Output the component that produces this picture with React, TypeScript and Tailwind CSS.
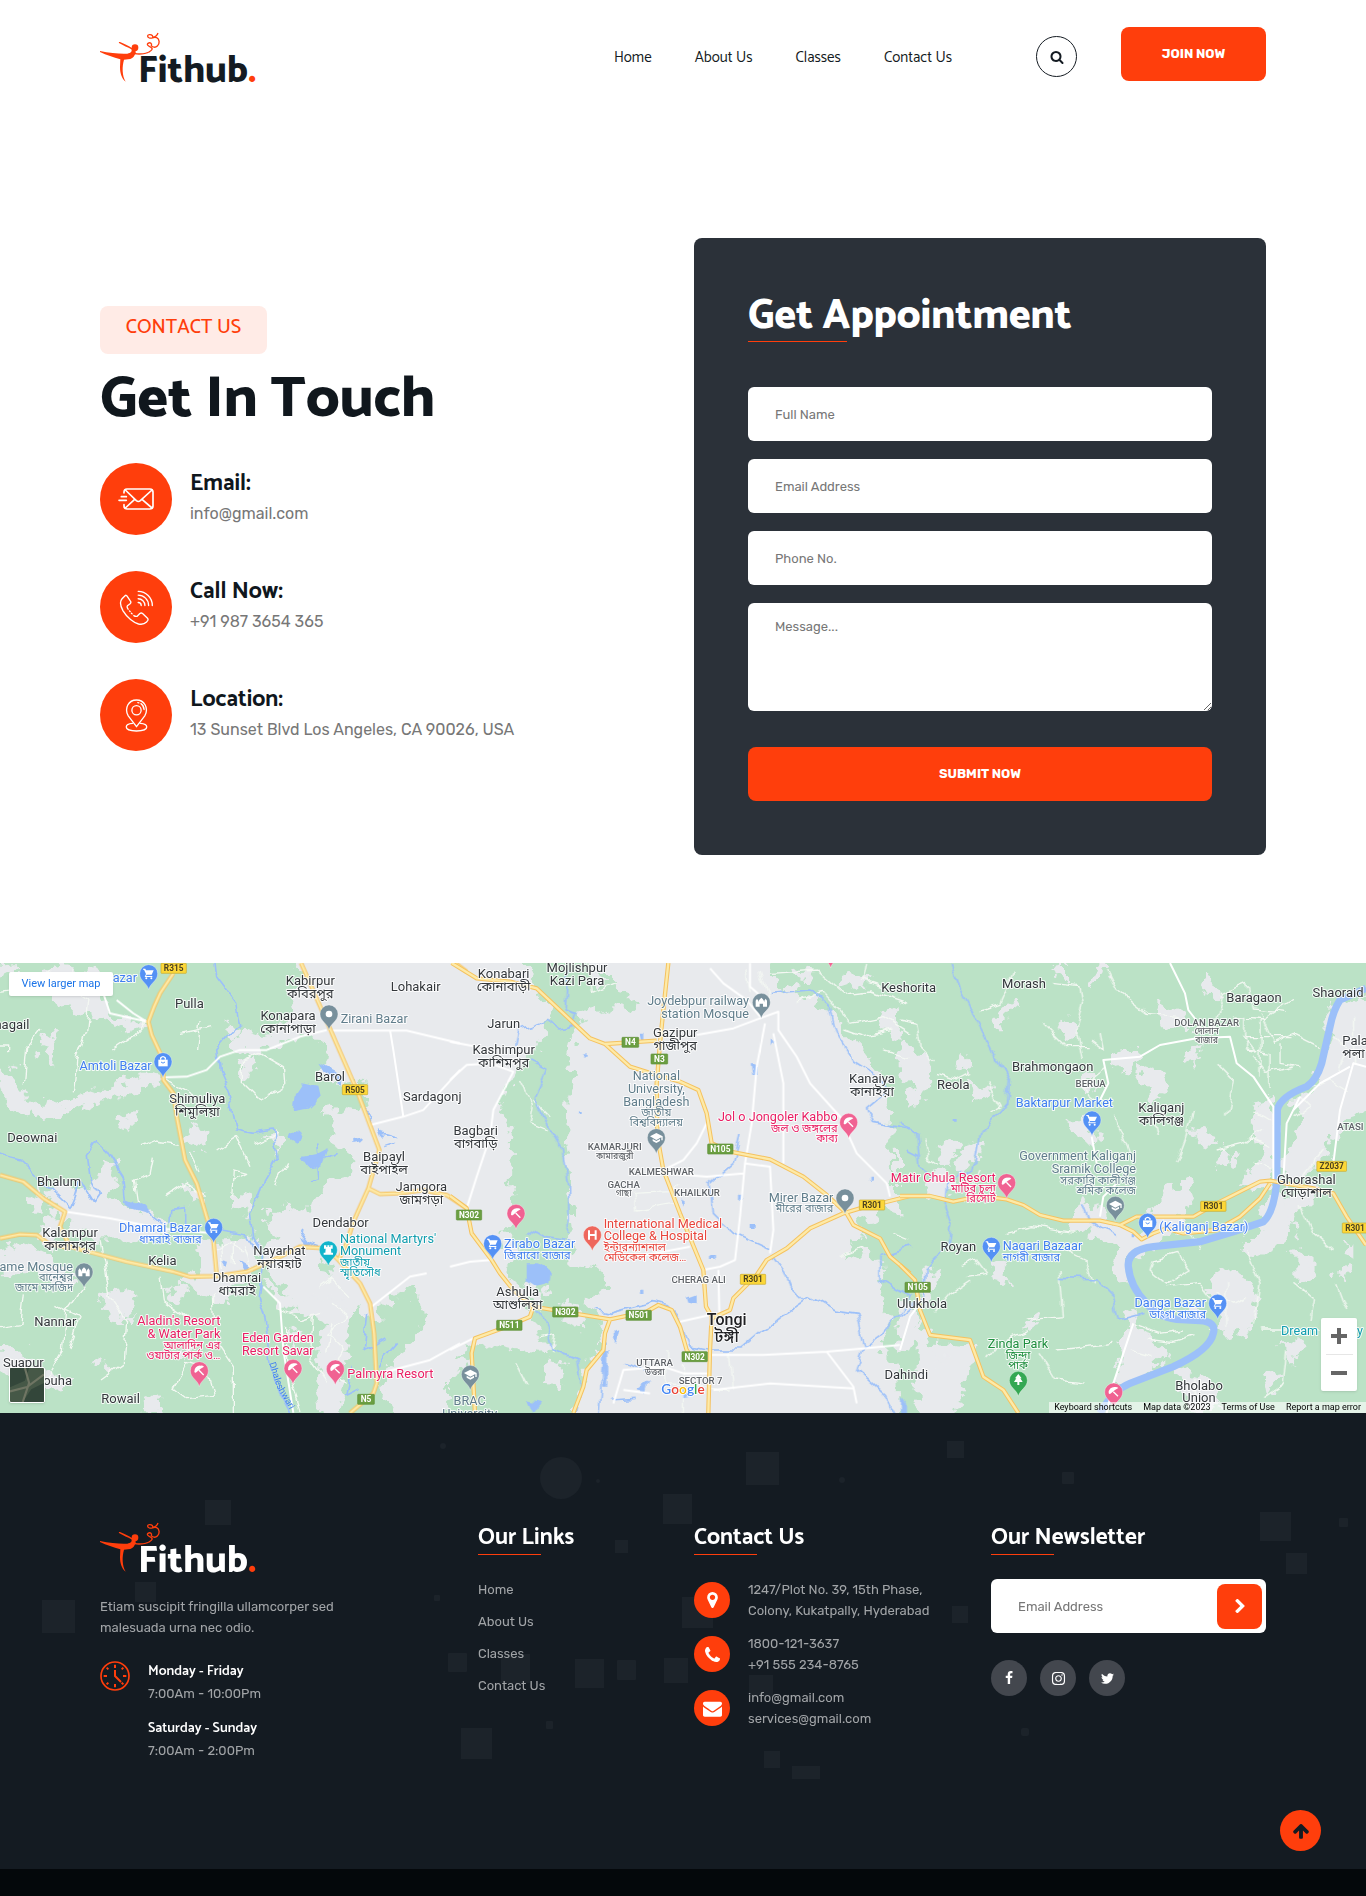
import React from "react";
import { FaInstagram, FaTwitter } from "react-icons/fa";

const HEAD = "font-['Catamaran','Open_Sans','Noto_Sans_Bengali',sans-serif]";
const BODY = "font-['Rubik','Inter',sans-serif]";

/* ---------- Logo ---------- */

function Logo({ light = false }: { light?: boolean }) {
  return (
    <svg viewBox="0 0 480 156" className="h-[52px] w-40 overflow-visible" role="img" aria-label="Fithub.">
      <g fill="#ff3e0c">
        <path d="M0 57C30 64 62 66 82 65C93 63 97 58 94 52C84 46 70 41 57 33C56 30 57 29 60 30C74 36 86 41 97 49C108 54 110 62 104 69C101 77 94 81 84 82L72 83C66 104 66 130 77 149C66 142 60 124 60 106L61 82C40 76 20 69 0 60Z" />
        <circle cx="105" cy="47" r="10" />
        <path d="M102 62C120 66 138 64 149 58L150 60C138 68 118 70 103 67Z" />
      </g>
      <path
        d="M147 60C156 55 160 50 153 46C145 42 139 38 144 34C150 30 157 34 154 41C158 46 166 48 172 42C180 34 179 22 170 17C160 13 156 21 148 18C141 15 141 9 148 8C156 7 160 13 158 17C166 15 172 9 174 3"
        fill="none"
        stroke="#ff3e0c"
        strokeWidth="4"
      />
      <text
        x="114"
        y="150"
        fontFamily="Catamaran, 'Open Sans', sans-serif"
        fontWeight="800"
        fontSize="111"
        fill={light ? "#ffffff" : "#141b22"}
      >
        Fithub<tspan fill="#ff3e0c">.</tspan>
      </text>
    </svg>
  );
}

/* ---------- Line icons ---------- */

function MailFast() {
  return (
    <svg viewBox="0 0 108 66" className="h-[22px] w-9" fill="none" stroke="#fff" strokeWidth="5" strokeLinecap="round" strokeLinejoin="round">
      <path d="M18 15V12Q18 3 27 3H96Q105 3 105 12V54Q105 63 96 63H27Q18 63 18 54V50" />
      <path d="M22 6L55 38Q61 43 67 38L102 6M102 60L72 34M22 60L50 34" />
      <path d="M10 26H25M3 37H25" />
    </svg>
  );
}

function PhoneWaves() {
  return (
    <svg viewBox="0 0 104 104" className="h-[35px] w-[35px]" fill="none" stroke="#fff" strokeWidth="4" strokeLinecap="round" strokeLinejoin="round">
      <path d="M18 17L9 26C2 34 3 46 12 62C24 82 44 97 58 101C68 103 76 101 81 96L85 91Q88 87 84 83L70 70Q66 67 62 70L54 78C50 79 47 78 44 76M27 57C24 53 23 50 25 47L33 41Q37 37 34 33L24 18Q21 14 18 17M31 62L33 64M37 69L39 71" />
      <path d="M57 4C80 4 99 23 99 46M57 15C74 15 88 29 88 46M57 26C68 26 77 35 77 46M57 37C62 37 66 41 66 46" />
    </svg>
  );
}

function PinOutline() {
  return (
    <svg viewBox="0 0 68 100" className="h-[33px] w-[23px]" fill="none" stroke="#fff" strokeWidth="4" strokeLinecap="round" strokeLinejoin="round">
      <path d="M34 84L9 51C-4 28 10 3 34 3S72 28 59 51Z" />
      <circle cx="34" cy="34" r="14" />
      <path d="M38 11C49 12 56 20 57 32" strokeDasharray="3 7 40" />
      <path d="M22 74C9 75 3 80 3 85C3 92 16 97 34 97S65 92 65 85C65 80 58 75 46 74" />
    </svg>
  );
}

function ClockOutline() {
  return (
    <svg viewBox="0 0 90 90" className="h-[30px] w-[30px] shrink-0" fill="none" stroke="#ff3e0c" strokeWidth="6">
      <circle cx="45" cy="45" r="42" strokeWidth="5" />
      <path d="M45 27V45L63 63" />
      <path d="M45 11V21M45 69V79M11 45H21M69 45H79" />
      <path d="M20 20L25 25M65 65L70 70M70 20L65 25M25 65L20 70" />
    </svg>
  );
}

/* ---------- Solid icons ---------- */

function Solid({ box, d, className }: { box: string; d: string; className: string }) {
  return (
    <svg viewBox={box} className={className} fill="currentColor" aria-hidden="true">
      <path d={d} />
    </svg>
  );
}

const SQUARE = "0 0 1792 1792";

const SearchIcon = () => (
  <Solid
    box={SQUARE}
    className="h-[14px] w-[14px]"
    d="M1216 832q0-185-131.5-316.5t-316.5-131.5-316.5 131.5-131.5 316.5 131.5 316.5 316.5 131.5 316.5-131.5 131.5-316.5zm512 832q0 52-38 90t-90 38q-54 0-90-38l-343-342q-179 124-399 124-143 0-273.5-55.5t-225-150-150-225-55.5-273.5 55.5-273.5 150-225 225-150 273.5-55.5 273.5 55.5 225 150 150 225 55.5 273.5q0 220-124 399l343 343q37 37 37 90z"
  />
);

const MarkerIcon = () => (
  <Solid
    box="0 0 1024 1536"
    className="h-4 w-[11px]"
    d="M768 512q0-106-75-181t-181-75-181 75-75 181 75 181 181 75 181-75 75-181zm256 0q0 109-33 179l-364 774q-16 33-47.5 52t-67.5 19-67.5-19-46.5-52l-365-774q-33-70-33-179 0-212 150-362t362-150 362 150 150 362z"
  />
);

const PhoneIcon = () => (
  <Solid
    box="0 0 1408 1408"
    className="h-[15px] w-[15px]"
    d="M1408 1112q0 27-10 70.5t-21 68.5q-21 50-122 106-94 51-186 51-27 0-53-3.5t-57.5-12.5-47-14.5-55.5-20.5-49-18q-98-35-175-83-127-79-264-216t-216-264q-48-77-83-175-3-9-18-49t-20.5-55.5-14.5-47-12.5-57.5-3.5-53q0-92 51-186 56-101 106-122 25-11 68.5-21t70.5-10q14 0 21 3 18 6 53 76 11 19 30 54t35 63.5 31 53.5q3 4 17.5 25t21.5 35.5 7 28.5q0 20-28.5 50t-62 55-62 53-28.5 46q0 9 5 22.5t8.5 20.5 14 24 11.5 19q76 137 174 235t235 174q2 1 19 11.5t24 14 20.5 8.5 22.5 5q18 0 46-28.5t53-62 55-62 50-28.5q14 0 28.5 7t35.5 21.5 25 17.5q25 15 53.5 31t63.5 35 54 30q70 35 76 53 3 7 3 21z"
  />
);

const EnvelopeIcon = () => (
  <Solid
    box={SQUARE}
    className="h-[19px] w-[19px]"
    d="M1792 710v794q0 66-47 113t-113 47h-1472q-66 0-113-47t-47-113v-794q44 49 101 87 362 246 497 345 57 42 92.5 65.5t94.5 48 110 24.5h2q51 0 110-24.5t94.5-48 92.5-65.5q170-123 498-345 57-39 100-87zm0-294q0 79-49 151t-122 123q-376 261-468 325-10 7-42.5 31t-54 38.5-52 32.5-57.5 27-50 9h-2q-23 0-50-9t-57.5-27-52-32.5-54-38.5-42.5-31q-91-64-262-182.5t-205-142.5q-62-42-117-115.5t-55-136.5q0-78 41.5-130t118.5-52h1472q65 0 112.5 47t47.5 113z"
  />
);

const ChevronIcon = () => (
  <Solid
    box="70 -160 1080 1548"
    className="h-[14px] w-[10px]"
    d="M1107 659l-742 742q-19 19-45 19t-45-19l-166-166q-19-19-19-45t19-45l531-531-531-531q-19-19-19-45t19-45l166-166q19-19 45-19t45 19l742 742q19 19 19 45t-19 45z"
  />
);

const ArrowUpIcon = () => (
  <Solid
    box={SQUARE}
    className="h-[18px] w-[18px]"
    d="M1675 971q0 51-37 90l-75 75q-38 38-91 38-54 0-90-38l-294-293v704q0 52-37.5 84.5t-90.5 32.5h-128q-53 0-90.5-32.5t-37.5-84.5v-704l-294 293q-36 38-90 38t-90-38l-75-75q-38-38-38-90 0-53 38-91l651-651q35-37 90-37 54 0 91 37l651 651q37 39 37 91z"
  />
);

const FacebookIcon = () => (
  <Solid
    box={SQUARE}
    className="h-[14px] w-[14px]"
    d="M1343 12v264h-157q-86 0-116 36t-30 108v189h293l-39 296h-254v759h-306v-759h-255v-296h255v-218q0-186 104-288.5t277-102.5q147 0 228 12z"
  />
);

/* ---------- Map ---------- */

const GREEN = "#bbe2c6";
const LAND = "#e8eaed";
const WATER = "#9cc0f9";

type Tile = { x: number; green: string[]; gray: string[]; water: string[]; ponds: string[]; lanes: string[]; white: string[]; yellow: string[] };

const tiles: Tile[] = [
  {
    x: 0,
    green: [
      "M-60 0H880L905 80L870 130L880 170L830 230L700 260L690 300L760 310L830 285L880 265L960 270L985 310L950 370L990 400L1090 395L1100 480L1010 470L960 500L1000 520L995 570L1060 620L1055 680L980 700L945 760L900 790L860 760L800 790L820 860L780 900L830 1000L900 1080L990 1080L960 1180L940 1300L960 1430H-60Z",
      "M1060 1080L1140 1110L1145 1060L1250 1010L1275 1150L1170 1230L1150 1330L1210 1430H1060L1010 1330L1040 1220Z",
      "M960 930L1010 940L1000 965L960 960Z",
      "M1330 1340L1400 1290V1430H1320Z",
    ],
    gray: [
      "M190 50L290 65L310 130L330 190L360 215L440 215L390 240L320 210L220 185L160 140L140 70Z",
      "M0 50L60 45L40 70L0 90Z",
      "M120 260L170 250L160 290L145 340L120 300L130 285Z",
      "M0 360L40 370L70 440L150 470L330 410L460 370L500 385L450 410L340 440L240 470L100 500L40 490L0 400Z",
      "M360 500L410 490L390 550L350 540Z",
      "M570 520L610 550L600 590L560 570Z",
      "M720 340L760 320L750 380L730 390Z",
      "M310 630L350 640L330 720L380 780L450 790L500 830L420 880L300 800L240 790L180 830L150 890L120 860L170 790L150 720L200 700L260 720L300 690Z",
      "M230 720L300 790L380 820L370 860L300 870L220 830Z",
      "M600 880L720 870L760 850L770 930L720 1000L680 1050L600 1030L560 990L610 960Z",
      "M800 1000L860 1050L920 1060L990 1040L1060 1080L1040 1170L1000 1220L960 1180L980 1120L900 1080L830 1070Z",
      "M310 1040L360 1020L420 1050L370 1090L360 1130L330 1090Z",
      "M0 900L60 880L140 920L230 1000L160 1010L90 960L0 960Z",
      "M0 1180L50 1200L110 1250L200 1300L120 1310L30 1280L0 1240Z",
      "M380 1090L400 1100L390 1130ZM520 1210L570 1200L560 1230Z",
      "M800 560L840 560L830 600ZM700 730L760 740L740 790L700 770Z",
      "M560 720L600 730L580 760ZM280 1220L310 1240L290 1260Z",
      "M690 210L720 240L700 255L680 240ZM500 1020L550 1000L530 1050Z",
      "M110 720L150 740L120 790L90 760ZM440 1340L480 1350L470 1380H430ZM870 1130L900 1150L880 1190Z",
    ],
    water: [
      "M645 39L650 80L710 160L722 230L685 260L650 300L658 360L685 420L710 540L760 550L820 540L835 620L795 690L780 740L748 790L758 860L790 920L775 1040L795 1100L810 1240L830 1310L875 1389",
      "M0 615L60 630L120 690L210 775L225 740L240 690L280 755L298 730L270 680L262 620L290 575L320 600L370 680L380 760L450 790L490 820M510 820L512 775L560 770V830M640 840L740 855L770 900",
      "M1100 490L1120 500L1105 520M1060 575L1090 570M1140 545L1190 560M1150 590L1180 580M1010 610L960 640L910 625M950 580L960 680L930 690M900 840L930 880L960 890M1060 1250L1040 1330L1080 1310M1100 1090L1090 1200L1160 1160M1130 1250L1190 1180",
    ],
    ponds: [
      "M905 400L955 410L962 440L930 470L878 478L885 430Z",
      "M955 338L1030 375L1025 398L975 370Z",
      "M870 540L905 545L890 575L865 560Z",
      "M380 750L430 770L440 790L390 775Z",
      "M905 625L950 615L990 595L970 650L925 655Z",
      "M670 930L690 935L685 955ZM715 930L745 950L735 970ZM905 860L935 880L920 895Z",
      "M1060 570L1090 565L1085 580L1060 585ZM1130 540L1150 550L1140 565ZM1085 480H1100L1095 495Z",
    ],
    lanes: [
      "M0 130L80 120L150 60M220 50L210 110L270 150L260 240L230 330L220 430M120 240L80 290L70 400M0 285H20V310M440 215L400 260L340 300M500 390L580 440L600 480M590 300L600 210M540 250L640 230M300 870L330 1040L380 1110L370 1240L300 1290M420 590L470 570L530 580M460 620L450 670L400 690L410 760M700 690L740 670L700 660L695 740M620 740L560 700L500 740M250 1010L200 1080L190 1200L130 1300M520 1310L560 1240L620 1260L640 1330L560 1340Z",
      "M730 330L780 310L850 350L855 410L780 450L730 400ZM650 600L710 560L750 650M570 600L600 660M830 550L760 580M860 640L830 700M940 1100L930 1230L980 1300M830 1080L900 1110L960 1090M70 1030L60 1120L0 1130M160 1060L240 1100L210 1200M640 1030L645 1170L700 1250V1389M480 980L490 1050L560 1100M860 1130V1260L900 1380",
      "M650 900L690 880L730 900M660 880L670 960M700 870L700 940M730 880L750 960L690 1000M990 1060L1040 1100L980 1150L1030 1200L990 1280L1040 1300M1000 1110L980 1200M960 1020L1000 990L1050 1040",
    ],
    white: [
      "M980 240L900 260L800 300L720 300L660 320L620 360L560 380L490 382",
      "M985 242H1220L1380 280M1170 240L1180 300L1210 500L1110 525M1210 500L1270 480L1380 360",
      "M195 785L330 805L480 835L640 850",
      "M310 130L330 190L440 215M440 215L400 190L350 150",
      "M1020 930L1060 960M1115 1070L1230 980L1280 970M1140 1270L1290 1230L1380 1180",
      "M790 1010L840 1060L850 1200L880 1389",
    ],
    yellow: [
      "M520 70L480 130L462 170L445 215L455 255L490 330L490 390L520 430L530 500L555 630L590 700L640 870L650 975",
      "M903 39L985 225L1070 420L1138 600L1105 715L1060 815L1040 880L1015 930L1080 1000L1110 1060L1122 1150L1130 1300L1120 1330L1050 1389",
      "M1105 715L1140 732L1200 730L1270 720L1340 735L1400 775",
      "M0 675L70 695L130 745L195 785L180 830L210 890L380 935L520 965L570 980L650 978L740 965L830 925L900 890L980 895L1015 930",
      "M0 865L60 853L110 855L145 880L210 895",
      "M1365 39L1400 65",
    ],
  },
  {
    x: 1350,
    green: [
      "M205 0H400L410 60H470L520 130L570 160L560 190L480 170L400 190L370 250L355 340L372 380L350 440L345 560L355 700L365 830L360 940L450 960L475 1000L440 1030L400 1050L450 1100L460 1200L400 1260L370 1430H120L90 1300L30 1210L110 1180L200 1200L300 1210L250 1100L200 1010L170 960L200 900L160 850L200 790L185 700L190 560L150 480L170 410L190 370L230 330L260 290L290 230L310 170L270 130Z",
      "M950 0H1400V720H1315L1320 480L1290 370L1240 300L1180 240L1100 140L1000 110L960 70Z",
      "M1170 940L1190 880L1250 860L1230 820L1290 785L1400 800V1430H1350L1340 1250L1290 1200L1320 1100L1290 1010L1310 950L1250 900Z",
      "M0 1290L60 1250L110 1300V1430H0Z",
    ],
    gray: [
      "M330 1060L380 1070L390 1140L340 1100ZM1200 60L1260 80L1240 120L1180 100Z",
      "M1040 60L1080 80L1060 110ZM1300 180L1350 200L1340 260L1290 230Z",
      "M240 980L290 1030L270 1060L230 1040ZM1330 600L1380 620V690L1330 660Z",
      "M300 1230L350 1250L330 1320L280 1290ZM420 60L460 90L430 110Z",
    ],
    water: [
      "M355 60L345 180L380 190L370 230L330 240L290 205L250 230L210 240L200 285",
      "M240 335L290 360L255 440L290 520L340 600L355 700L358 850M230 860L260 840L290 860L360 870",
      "M250 1070L290 1120L310 1200L380 1230L390 1300L380 1389M440 1080L480 1090L610 1055L650 1065L690 1110L715 1190L770 1200L870 1200L940 1140L1020 1080L1080 1040L1150 1080L1220 1090L1245 1190L1220 1260L1300 1330L1330 1389M1245 1190L1300 1150L1360 1080L1380 1040L1290 990V920L1380 890",
      "M970 920L1000 960L1020 1010L1060 1050M960 130L1080 120L1140 170L1160 250L1210 330L1290 380L1310 420L1250 470L1270 520L1380 540M870 560L850 640L780 700L790 790L850 850L960 900",
      "M465 1180L450 1389M480 1350L560 1345M530 1240L600 1270",
    ],
    ponds: [
      "M230 940L260 940L300 965L295 1000L260 1010L230 990Z",
      "M565 245H580V265H570ZM905 340H920V375H910ZM965 265L975 275L965 290ZM690 745L705 755L695 770ZM905 825H920V840H905ZM780 915H795V930H780Z",
      "M460 1200H475V1310H462ZM490 1140L510 1150L495 1180ZM710 1040L740 1030V1060L715 1055ZM230 1350L270 1360L250 1389ZM560 1320L600 1290L590 1330ZM700 1310L720 1340L700 1345Z",
      "M385 480H395V490H385ZM400 310H410V320H400ZM660 370H668V382H660ZM1255 680H1265V692H1255ZM870 740H882V752H870ZM570 1025H580V1035H570Z",
    ],
    lanes: [
      "M960 70L1100 60L1180 130L1260 120L1380 160M1040 150L1120 130L1200 220L1300 200L1380 250M1180 240L1240 260L1330 240M1250 39L1240 90L1330 120M1300 300L1380 320M420 60L430 130L500 100M210 390L250 470L240 520L290 540M250 450L300 500M270 1160L320 1150L310 1210M200 1240L230 1300M1330 850L1380 870M1170 920L1240 890",
      "M890 60L900 130M930 60L960 150M550 730L660 725L690 700M555 730L560 780L670 760M650 1200V1300L830 1320M700 1240V1389M840 1200L850 1320",
    ],
    white: [
      "M0 275L80 290M0 390L50 345L120 340L190 365L130 480L120 560L80 680L50 775M0 950L60 935L125 930M0 1200L70 1165",
      "M740 255L850 235L930 205L985 185V240L1040 320L1080 400L1170 500L1220 610L1310 700L1320 740M780 55L820 100L890 150L930 200",
      "M945 220L920 350L905 520L885 640L870 800L855 930L810 950L760 960M970 250L1000 400L1000 640M640 660L700 630L740 580L775 510M650 670L770 680L880 670M885 640L960 650L970 840L960 910",
      "M805 960L808 1090M690 1115L780 1095M785 1215L940 1215L1130 1205L1240 1195L1350 1185M1130 1205L1210 1310L1220 1360M790 1320L960 1300L1210 1315M490 1360L520 1260L640 1250L700 1270H780M520 1320L600 1330",
      "M560 920L720 890M900 39V110L935 140",
    ],
    yellow: [
      "M5 39L80 85L180 95L260 115L340 190L420 265L465 282L620 272",
      "M465 282L540 350L620 375L690 395L745 420L770 490L785 580L840 605L960 628L1060 680L1130 735L1190 790L1210 825L1290 865L1320 920L1380 970",
      "M655 39L640 180L630 280L620 400L622 560L640 660L690 790L760 960L768 1070L785 1100L780 1200L775 1389",
      "M0 738L50 775L65 850L125 930L150 970L190 1020L250 1070L370 1090L480 1108L590 1085L625 1065L665 1080L690 1130L710 1200L730 1230",
      "M250 1070L240 1100L170 1130L75 1165L65 1210L75 1389",
      "M480 1108L465 1150L460 1200L410 1260L400 1310L370 1389",
      "M785 1105L840 1080L850 1045L920 975L950 930L1010 895L1080 835L1180 790L1230 775L1380 738",
    ],
  },
  {
    x: 2700,
    green: ["M0 0H1460V1430H160L230 1200L200 1180L90 1170L50 1080L0 1060Z"],
    gray: [
      "M0 270L70 320L90 390L50 460L30 390L0 350Z",
      "M460 50L500 45L500 100L470 80ZM590 60L620 50L610 80L580 110Z",
      "M165 340L180 310L215 350L190 370Z",
      "M290 240L300 190L350 160L370 175L320 190L305 240Z",
      "M200 400L270 410L280 440L230 450Z",
      "M470 225L510 210L515 240L490 260Z",
      "M770 160L840 180L860 240L800 220ZM920 90L950 110L940 140L910 120Z",
      "M715 350L760 340L800 400L770 440L730 400Z",
      "M850 330L870 300L910 290L880 340ZM640 310L690 300L720 320L680 350L640 340Z",
      "M510 520L560 500L590 540L580 590L550 560L520 550Z",
      "M110 590L150 580L170 600L140 650ZM170 640L210 580L245 570L240 610L180 660Z",
      "M70 690L110 670L170 700L100 740Z",
      "M530 770L560 760L640 820L700 850L740 830L800 740L860 690L880 740L830 800L850 830L760 880L690 920L680 1000L640 970L650 900L600 850L520 840Z",
      "M1280 170L1460 140V520L1340 480L1300 560L1260 640L1160 700L1140 640L1200 560L1210 520L1180 460L1250 400L1290 260Z",
      "M1080 460L1110 450L1130 520L1120 700L1060 730L1030 690L1090 640L1080 570L1050 510Z",
      "M1100 750L1170 740L1230 700L1250 740L1180 800L1160 870L1060 920L1040 880L1090 840Z",
      "M990 960L1050 1000L1070 1080L1030 1150L960 1160L950 1080L920 1020L940 980Z",
      "M700 1080L730 1140L760 1160L800 1200L780 1230L720 1280L650 1310L670 1200L680 1120Z",
      "M80 970L110 965L100 1030L60 1060ZM270 930L310 950L330 1000L290 990Z",
      "M90 1210L140 1220L150 1240L100 1230ZM380 1110L410 1100L400 1140L370 1150Z",
      "M1190 900L1240 930L1230 980L1190 990ZM1310 960L1350 950L1340 990ZM1090 1280L1150 1270L1100 1330Z",
      "M960 610L1000 610L990 640L965 660ZM880 540L930 550L950 580L900 570Z",
      "M840 1260L930 1290L950 1360L900 1389L850 1340ZM0 1060L40 1100L60 1180L0 1210Z",
      "M1340 880L1398 900V930L1330 910ZM1150 1180L1200 1190L1180 1240Z",
      "M20 420L50 440L30 460ZM550 370L580 400L560 430ZM880 1070L900 1090L870 1100Z",
    ],
    water: [
      "M160 39L185 120L270 290L325 390L320 460L245 550L230 640L140 700L135 770L155 830L140 890L75 960L70 1040L0 1100",
      "M0 520L50 550L60 650L100 690M20 600L60 620M480 985L590 990L640 1040L655 1110L730 1090M550 760L570 810L650 860",
    ],
    ponds: ["M695 852H706V865H695ZM155 510H167V518H155ZM0 1340L15 1360V1389H0Z"],
    lanes: [
      "M340 70L300 160L240 180M460 100L540 110L550 160L530 240L550 330M620 60L650 120L740 190L840 200M0 210L50 220L60 290L100 330M110 370L170 390L210 370M430 220L500 290L560 290M570 270L610 300L600 250M620 350L540 410L590 450M640 500L670 560L700 640M760 480L775 560M940 240L970 130L1040 100L1060 180L1160 190M1000 200L1090 210L1180 150M950 340L1000 390L980 500",
      "M70 560L80 620L110 640M280 480L300 470L260 400M240 660L190 760M320 850L400 830L520 850M500 900L560 930L580 1000M480 960L490 1100L380 1110M760 930L830 910L870 960L800 1000L750 960ZM800 1010L900 1000L940 1050M470 1200L640 1180M380 1140L300 1180L260 1230M420 1210L470 1290L560 1300M1080 1140L1260 1140M1040 900L1080 1000L1060 1130M1200 760L1240 850L1300 900M1180 1000L1240 1050L1230 1110M1270 600L1200 690M210 990L150 1030L100 1090M180 950L230 930L260 970L200 980M840 800L900 900M1080 190L1120 280L1180 250L1260 290M1060 320L1100 370L1180 350M1220 420L1290 390L1340 420M1030 260L1070 310M950 600L1030 580L1090 540M830 640L860 560L880 480M1160 1200L1150 1300L1090 1340M1310 1000L1340 1080",
      "M700 1120L780 1150L850 1140M740 1170L820 1180L880 1160M690 1200L760 1220M880 1290L900 1389M950 1020L1000 1060L1040 1040M980 1000V1130",
      "M1040 200V300L1110 310V420M1040 260L1180 260M1080 210V380M1140 280V340L1200 350M1300 260L1340 300L1320 360M1360 200V340M1200 440L1230 470L1190 500M1060 480L1110 510M1050 560L1110 590M1070 640L1120 650",
    ],
    white: [
      "M810 39L855 130L865 180L900 225M600 800L610 740L650 700M575 560L590 640M600 450L625 400L610 330L720 320L780 285L890 265L990 260L1010 340L1060 380L1120 470V690",
      "M1398 350L1360 340L1320 480L1300 640M1180 480L1240 420L1260 400L1350 350M0 1200L30 1100L60 1060M700 1120L640 1300L620 1389M1150 690L1160 520L1200 440",
    ],
    yellow: [
      "M0 738L90 738L160 755L240 738L320 748L370 765L420 795L490 812H600L660 825L700 845L725 868L760 850L800 835L850 850L950 840L1020 800L1080 745L1110 700",
      "M660 825L710 800H880L950 760L1080 695L1110 692L1240 715L1300 730L1340 800L1398 885",
      "M0 945L45 990L60 1080L90 1155L210 1170L250 1280L310 1320L355 1389",
    ],
  },
];

type Kind = "town" | "blue" | "pink" | "slate" | "teal" | "green" | "red" | "area" | "city";
type Anchor = "start" | "middle" | "end";
type Label = [x: number, y: number, kind: Kind, anchor: Anchor, latin: string[], bengali?: string[]];

const kindColor: Record<Kind, string> = {
  town: "#33373b",
  city: "#202124",
  blue: "#3f7ef0",
  pink: "#e91e63",
  slate: "#607d8b",
  teal: "#129eaf",
  green: "#1e8e3e",
  red: "#e8453c",
  area: "#5f6368",
};

const labels: Label[] = [
  [411, 84, "blue", "end", ["azar"]],
  [568, 159, "town", "middle", ["Pulla"]],
  [88, 223, "town", "end", ["nagail"]],
  [931, 92, "town", "middle", ["Kabirpur"], ["কবিরপুর"]],
  [1247, 110, "town", "middle", ["Lohakair"]],
  [864, 197, "town", "middle", ["Konapara"], ["কোনাপাড়া"]],
  [1022, 205, "slate", "start", ["Zirani Bazar"]],
  [455, 348, "blue", "end", ["Amtoli Bazar"]],
  [990, 380, "town", "middle", ["Barol"]],
  [592, 445, "town", "middle", ["Shimuliya"], ["শিমুলিয়া"]],
  [1297, 440, "town", "middle", ["Sardagonj"]],
  [97, 563, "town", "middle", ["Deownai"]],
  [1152, 620, "town", "middle", ["Baipayl"], ["বাইপাইল"]],
  [177, 695, "town", "middle", ["Bhalum"]],
  [1264, 709, "town", "middle", ["Jamgora"], ["জামগড়া"]],
  [1022, 817, "town", "middle", ["Dendabor"]],
  [605, 833, "blue", "end", ["Dhamrai Bazar"], ["ধামরাই বাজার"]],
  [210, 847, "town", "middle", ["Kalampur"], ["কালামপুর"]],
  [1020, 865, "teal", "start", ["National Martyrs'", "Monument"], ["জাতীয়", "স্মৃতিসৌধ"]],
  [838, 901, "town", "middle", ["Nayarhat"], ["নয়ারহাট"]],
  [487, 930, "town", "middle", ["Kelia"]],
  [219, 949, "slate", "end", ["ame Mosque"], ["বানেশ্বর", "জামে মসজিদ"]],
  [711, 981, "town", "middle", ["Dhamrai"], ["ধামরাই"]],
  [166, 1115, "town", "middle", ["Nannar"]],
  [661, 1113, "pink", "end", ["Aladin's Resort", "& Water Park"], ["আলাদিন এর", "ওয়াটার পার্ক ও…"]],
  [941, 1164, "pink", "end", ["Eden Garden", "Resort Savar"]],
  [70, 1238, "town", "middle", ["Suapur"]],
  [216, 1290, "town", "end", ["ouha"]],
  [1042, 1270, "pink", "start", ["Palmyra Resort"]],
  [362, 1346, "town", "middle", ["Rowail"]],
  [1511, 70, "town", "middle", ["Konabari"], ["কোনাবাড়ী"]],
  [1731, 52, "town", "middle", ["Mojlishpur", "Kazi Para"]],
  [1511, 221, "town", "middle", ["Jarun"]],
  [2247, 152, "slate", "end", ["Joydebpur railway", "station Mosque"]],
  [2026, 248, "town", "middle", ["Gazipur"], ["গাজীপুর"]],
  [1511, 299, "town", "middle", ["Kashimpur"], ["কাশিমপুর"]],
  [1969, 378, "slate", "middle", ["National", "University,", "Bangladesh"], ["জাতীয়", "বিশ্ববিদ্যালয়"]],
  [1427, 542, "town", "middle", ["Bagbari"], ["বাগবাড়ি"]],
  [2513, 501, "pink", "end", ["Jol o Jongoler Kabbo"], ["জল ও জঙ্গলের", "কাব্য"]],
  [2616, 386, "town", "middle", ["Kanaiya"], ["কানাইয়া"]],
  [1844, 590, "area", "middle", ["KAMARJURI"], ["কামারজুরী"]],
  [1984, 665, "area", "middle", ["KALMESHWAR"]],
  [1871, 703, "area", "middle", ["GACHA"], ["গাছা"]],
  [2091, 727, "area", "middle", ["KHAILKUR"]],
  [2500, 742, "slate", "end", ["Mirer Bazar"], ["মীরের বাজার"]],
  [1811, 820, "red", "start", ["International Medical", "College & Hospital"], ["ইন্টারন্যাশনাল", "মেডিকেল কলেজ…"]],
  [1512, 881, "blue", "start", ["Zirabo Bazar"], ["জিরাবো বাজার"]],
  [2096, 989, "area", "middle", ["CHERAG ALI"]],
  [1553, 1024, "town", "middle", ["Ashulia"], ["আশুলিয়া"]],
  [2180, 1108, "city", "middle", ["Tongi"], ["টঙ্গী"]],
  [1964, 1239, "area", "middle", ["UTTARA"], ["উত্তরা"]],
  [2102, 1291, "area", "middle", ["SECTOR 7"]],
  [1409, 1352, "slate", "middle", ["BRAC", "University"]],
  [2726, 113, "town", "middle", ["Keshorita"]],
  [3072, 100, "town", "middle", ["Morash"]],
  [3762, 143, "town", "middle", ["Baragaon"]],
  [4014, 127, "town", "middle", ["Shaoraid"]],
  [3620, 217, "area", "middle", ["DOLAN BAZAR"], ["দোলান", "বাজার"]],
  [4027, 272, "town", "start", ["Pala"], ["পলা"]],
  [3158, 348, "town", "middle", ["Brahmongaon"]],
  [2860, 404, "town", "middle", ["Reola"]],
  [3272, 401, "area", "middle", ["BERUA"]],
  [3193, 458, "blue", "middle", ["Baktarpur Market"]],
  [3484, 472, "town", "middle", ["Kaliganj"], ["কালিগঞ্জ"]],
  [4012, 530, "area", "start", ["ATASI"]],
  [3408, 618, "slate", "end", ["Government Kaliganj", "Sramik College"], ["সরকারি কালীগঞ্জ", "শ্রমিক কলেজ"]],
  [2987, 682, "pink", "end", ["Matir Chula Resort"], ["মাটির চুলা", "রিসোর্ট"]],
  [3919, 688, "town", "middle", ["Ghorashal"], ["ঘোড়াশাল"]],
  [3478, 830, "blue", "start", ["(Kaliganj Bazar)"]],
  [2875, 889, "town", "middle", ["Royan"]],
  [3008, 887, "blue", "start", ["Nagari Bazaar"], ["নাগরী বাজার"]],
  [2766, 1059, "town", "middle", ["Ulukhola"]],
  [3618, 1059, "blue", "end", ["Danga Bazar"], ["ডাংগা বাজার"]],
  [3843, 1143, "teal", "start", ["Dream"]],
  [4071, 1143, "teal", "start", ["y"]],
  [3054, 1181, "green", "middle", ["Zinda Park"], ["জিন্দা", "পার্ক"]],
  [2719, 1273, "town", "middle", ["Dahindi"]],
  [3597, 1305, "town", "middle", ["Bholabo", "Union"]],
];

type Glyph = "cart" | "bag" | "dot" | "rook" | "mosque" | "beach" | "cap" | "cross" | "tree";

const pins: [x: number, y: number, color: string, glyph: Glyph][] = [
  [446, 71, "#5491f5", "cart"],
  [987, 192, "#78909c", "dot"],
  [489, 335, "#5491f5", "bag"],
  [641, 832, "#5491f5", "cart"],
  [985, 900, "#12b5cb", "rook"],
  [252, 966, "#78909c", "mosque"],
  [598, 1262, "#f06292", "beach"],
  [879, 1255, "#f06292", "beach"],
  [1006, 1257, "#f06292", "beach"],
  [2284, 157, "#78909c", "mosque"],
  [1969, 563, "#78909c", "cap"],
  [2546, 517, "#f06292", "beach"],
  [2535, 744, "#78909c", "dot"],
  [1548, 790, "#f06292", "beach"],
  [1478, 881, "#5491f5", "cart"],
  [1777, 855, "#ee675c", "cross"],
  [1411, 1273, "#78909c", "cap"],
  [2492, 6, "#f06292", "beach"],
  [3276, 510, "#5491f5", "cart"],
  [3020, 698, "#f06292", "beach"],
  [3346, 766, "#78909c", "cap"],
  [3443, 817, "#5491f5", "bag"],
  [2974, 889, "#5491f5", "cart"],
  [3653, 1060, "#5491f5", "cart"],
  [3055, 1291, "#34a853", "tree"],
  [3341, 1326, "#f06292", "beach"],
];

const glyphs: Record<Glyph, React.ReactNode> = {
  cart: (
    <g fill="#fff">
      <path d="M-17 -15H-10L-8 -10H15L9 3H-6L-8 7H11V10H-12L-8 1L-14 -12H-17Z" />
      <circle cx="-7" cy="14" r="3" />
      <circle cx="8" cy="14" r="3" />
    </g>
  ),
  bag: (
    <g>
      <path d="M-14 -6H14V14H-14Z" fill="#fff" />
      <path d="M-7 -6V-11Q0 -19 7 -11V-6" fill="none" stroke="#fff" strokeWidth="4" />
      <path d="M-6 1Q0 8 6 1" fill="none" stroke="#5491f5" strokeWidth="3" />
    </g>
  ),
  dot: <circle r="10" fill="#fff" />,
  rook: <path d="M-13 -14H-6V-9H-3V-14H3V-9H6V-14H13V-4H8L9 8H14V14H-14V8H-9L-8 -4H-13Z" fill="#fff" />,
  mosque: <path d="M-17 13V-5L-13 -11L-9 -5V0Q-8 -8 0 -14Q8 -8 9 0V-5L13 -11L17 -5V13H5V4H-5V13Z" fill="#fff" />,
  beach: (
    <g fill="none" stroke="#fff" strokeWidth="4">
      <path d="M-15 4A17 17 0 0 1 4 -15Q10 -16 14 -12L4 -6L-8 4Q-12 8 -15 4Z" fill="#fff" stroke="none" />
      <path d="M-1 -1L13 13" />
    </g>
  ),
  cap: <path d="M-19 -4L0 -14L19 -4V8H15V-1L0 7ZM-11 4L0 10L11 4V10L0 16L-11 10Z" fill="#fff" />,
  cross: <path d="M-10 -14V14M10 -14V14M-10 0H10" stroke="#fff" strokeWidth="6" />,
  tree: <path d="M0 -19L10 -6H6L13 5H3V14H-3V5H-13L-6 -6H-10Z" fill="#fff" />,
};

const shields: [x: number, y: number, code: string][] = [
  [521, 55, "R315"],
  [1065, 419, "R505"],
  [1098, 1348, "N5"],
  [1407, 795, "N302"],
  [1891, 277, "N4"],
  [1978, 327, "N3"],
  [2161, 597, "N105"],
  [2616, 765, "R301"],
  [2259, 988, "R301"],
  [1696, 1086, "N302"],
  [1916, 1096, "N501"],
  [1528, 1126, "N511"],
  [2084, 1220, "N302"],
  [2753, 1012, "N105"],
  [3640, 769, "R301"],
  [3995, 649, "Z2037"],
  [4065, 834, "R301"],
];

function MapLabel({ label }: { label: Label }) {
  const [x, y, kind, anchor, latin, bengali = []] = label;
  const poi = kind !== "town" && kind !== "city" && kind !== "area";
  const size = kind === "city" ? 48 : kind === "area" ? 29 : poi ? 38 : 39;
  const step = kind === "area" ? 26 : 38;
  const small = kind === "area" ? 26 : poi ? 33 : kind === "city" ? 48 : 39;
  const smallStep = kind === "area" ? 25 : 30;
  const first = y + Math.round(size * 0.35);
  const last = first + (latin.length - 1) * step;
  return (
    <g
      fill={kindColor[kind]}
      stroke="#ffffff"
      strokeOpacity="0.85"
      strokeWidth="6"
      strokeLinejoin="round"
      paintOrder="stroke"
      textAnchor={anchor}
      fontFamily="Roboto, 'Noto Sans Bengali', sans-serif"
      fontWeight={kind === "city" || kind === "area" ? 500 : 400}
    >
      {latin.map((line, i) => (
        <text key={line} x={x} y={first + i * step} fontSize={size}>
          {line}
        </text>
      ))}
      {bengali.map((line, i) => (
        <text key={line} x={x} y={last + (poi ? 32 : kind === "area" ? 26 : kind === "city" ? 50 : 39) + i * smallStep} fontSize={small}>
          {line}
        </text>
      ))}
    </g>
  );
}

function MapCanvas() {
  return (
    <svg viewBox="0 39 4098 1350" preserveAspectRatio="xMidYMid slice" className="block h-full w-full" role="img" aria-label="Map of Tongi and Gazipur">
      <defs>
        <filter id="coast" x="0" y="0" width="4098" height="1440" filterUnits="userSpaceOnUse">
          <feTurbulence type="fractalNoise" baseFrequency="0.025" numOctaves="3" seed="4" result="noise" />
          <feDisplacementMap in="SourceGraphic" in2="noise" scale="75" xChannelSelector="R" yChannelSelector="G" />
        </filter>
        <filter id="wander" x="0" y="0" width="4098" height="1440" filterUnits="userSpaceOnUse">
          <feTurbulence type="fractalNoise" baseFrequency="0.02" numOctaves="2" seed="9" result="noise" />
          <feDisplacementMap in="SourceGraphic" in2="noise" scale="32" xChannelSelector="R" yChannelSelector="G" />
        </filter>
      </defs>
      <rect y="39" width="4098" height="1350" fill={LAND} />
      <g filter="url(#coast)">
        {tiles.map((t) => (
          <g key={t.x} transform={`translate(${t.x} 0)`}>
            <path d={t.green.join("")} fill={GREEN} />
            <path d={t.gray.join("")} fill={LAND} stroke={LAND} strokeWidth="8" strokeLinejoin="round" />
          </g>
        ))}
      </g>
      <rect x="4060" y="660" width="38" height="729" fill={GREEN} />
      <g filter="url(#wander)">
        {tiles.map((t) => (
          <g key={t.x} transform={`translate(${t.x} 0)`} fill="none" strokeLinejoin="round">
            <path d={t.lanes.join("")} stroke="#f4f8f3" strokeWidth="4" />
            <path d={t.water.join("")} stroke={WATER} strokeWidth="5" />
            <path d={t.ponds.join("")} fill={WATER} />
          </g>
        ))}
      </g>
      {tiles.map((t) => (
        <g key={t.x} transform={`translate(${t.x} 0)`} fill="none" strokeLinejoin="round">
          {t.x === 2700 && (
            <path
              d="M1398 115L1320 150Q1300 180 1290 230L1265 340Q1250 390 1220 410Q1140 440 1132 480L1130 700Q1120 790 1090 815L1000 845L900 875L760 890Q680 900 685 950Q690 1010 740 1060Q770 1100 830 1108L900 1112Q950 1115 940 1150Q930 1200 820 1250L690 1300Q640 1320 600 1389"
              stroke={WATER}
              strokeWidth="22"
            />
          )}
          <path d={t.white.join("")} stroke="#ffffff" strokeWidth="6" />
        </g>
      ))}
      {tiles.map((t) => (
        <g key={t.x} transform={`translate(${t.x} 0)`} fill="none" strokeLinejoin="round">
          <path d={t.yellow.join("")} stroke="#f5c25f" strokeWidth="13" />
          <path d={t.yellow.join("")} stroke="#fdeaa8" strokeWidth="7" />
        </g>
      ))}
      <path id="river-name" d="M808 1240L830 1310L875 1389" fill="none" />
      <text fontFamily="Roboto, sans-serif" fontSize="28" fill="#3f7ef0">
        <textPath href="#river-name">Dhaleshwari R</textPath>
      </text>
      {shields.map(([x, y, code], i) => {
        const w = code.length * 13 + 24;
        const national = code[0] === "N";
        return (
          <g key={i}>
            <rect x={x - w / 2} y={y - 15} width={w} height="30" rx="2" fill={national ? "#6b9f42" : "#fcd738"} stroke={national ? "#5d8f37" : "#c9a92c"} strokeWidth="2" />
            <text x={x} y={y + 9} textAnchor="middle" fontFamily="Roboto, sans-serif" fontWeight="700" fontSize="25" fill={national ? "#ffffff" : "#4d4320"}>
              {code}
            </text>
          </g>
        );
      })}
      {pins.map(([x, y, color, glyph], i) => (
        <g key={i} transform={`translate(${x} ${y})`}>
          <path d="M0 48C-4 28 -27 22 -27 0A27 27 0 0 1 27 0C27 22 4 28 0 48Z" fill={color} stroke="#ffffff" strokeOpacity="0.5" strokeWidth="2" />
          {glyphs[glyph]}
        </g>
      ))}
      {labels.map((label, i) => (
        <MapLabel key={i} label={label} />
      ))}
      <text x="2049" y="1331" textAnchor="middle" fontFamily="Lato, sans-serif" fontWeight="600" fontSize="41" stroke="#ffffff" strokeWidth="5" paintOrder="stroke">
        <tspan fill="#4285f4">G</tspan>
        <tspan fill="#ea4335">o</tspan>
        <tspan fill="#fbbc05">o</tspan>
        <tspan fill="#4285f4">g</tspan>
        <tspan fill="#34a853">l</tspan>
        <tspan fill="#ea4335">e</tspan>
      </text>
    </svg>
  );
}

function MapSection() {
  return (
    <section className="relative h-[450px] overflow-hidden font-[Roboto,sans-serif]">
      <MapCanvas />
      <a href="#map" className="absolute top-[9px] left-[9px] flex h-6 w-[104px] items-center justify-center rounded-xs bg-white text-[11px] text-[#1a73e8] shadow-sm">
        View larger map
      </a>
      <button type="button" aria-label="Satellite view" className="absolute bottom-[10px] left-[9px] h-9 w-9 overflow-hidden rounded-xs border border-white bg-[#465847] shadow">
        <svg viewBox="0 0 32 32" className="h-full w-full">
          <path d="M0 0H18L14 12L0 18ZM20 20L32 14V32H12Z" fill="#33463a" />
          <path d="M14 0L18 14L12 32M0 22L16 18L32 6" stroke="#6f7563" fill="none" strokeWidth="2" />
        </svg>
      </button>
      <div className="absolute right-[9px] bottom-[22px] flex w-9 flex-col items-center rounded-xs bg-white shadow">
        <button type="button" aria-label="Zoom in" className="flex h-9 w-full items-center justify-center">
          <svg viewBox="0 0 16 16" className="h-4 w-4" stroke="#666" strokeWidth="4">
            <path d="M0 8H16M8 0V16" />
          </svg>
        </button>
        <span className="h-px w-[27px] bg-[#e6e6e6]" />
        <button type="button" aria-label="Zoom out" className="flex h-9 w-full items-center justify-center">
          <svg viewBox="0 0 16 16" className="h-4 w-4" stroke="#666" strokeWidth="4">
            <path d="M0 8H16" />
          </svg>
        </button>
      </div>
      <div className="absolute right-0 bottom-0 flex h-[11px] items-center gap-[11px] bg-white/60 px-[5px] text-[9px] text-black">
        <button type="button">Keyboard shortcuts</button>
        <span>Map data ©2023</span>
        <a href="#terms">Terms of Use</a>
        <a href="#report">Report a map error</a>
      </div>
    </section>
  );
}

/* ---------- Header ---------- */

function Header() {
  return (
    <header className="mx-auto flex h-[110px] w-full max-w-[1166px] items-start justify-between">
      <a href="#home" className="mt-8">
        <Logo />
      </a>
      <div className="flex items-start pt-[27px]">
        <nav className={`mt-5 flex gap-[43px] text-[15px] leading-[22px] text-[#141b22] ${HEAD}`}>
          <a href="#home">Home</a>
          <a href="#about">About Us</a>
          <a href="#classes">Classes</a>
          <a href="#contact">Contact Us</a>
        </nav>
        <button type="button" aria-label="Search" className="mt-[9px] ml-[84px] flex h-[41px] w-[41px] items-center justify-center rounded-full border border-[#141b22] text-[#141b22]">
          <SearchIcon />
        </button>
        <a href="#join" className="ml-11 flex h-[54px] w-[145px] items-center justify-center rounded-lg bg-[#ff3e0c] text-[13px] font-bold text-white">
          JOIN NOW
        </a>
      </div>
    </header>
  );
}

/* ---------- Contact ---------- */

function ContactRow({ icon, title, text }: { icon: React.ReactNode; title: string; text: string }) {
  return (
    <li className="flex h-[72px] items-center gap-[18px]">
      <span className="flex h-[72px] w-[72px] shrink-0 items-center justify-center rounded-full bg-[#ff3e0c]">{icon}</span>
      <div className="pb-0.5">
        <h3 className={`text-[23px] leading-8 font-bold text-[#10171d] ${HEAD}`}>{title}</h3>
        <p className="text-base leading-7 text-[#777]">{text}</p>
      </div>
    </li>
  );
}

const fieldClass = "block w-full rounded-md bg-white px-[27px] text-[13px] text-[#333] placeholder:text-[#777] outline-none";

function Field({ id, label, type }: { id: string; label: string; type: string }) {
  return (
    <div>
      <label htmlFor={id} className="sr-only">
        {label}
      </label>
      <input id={id} type={type} placeholder={label} className={`${fieldClass} h-[54px]`} />
    </div>
  );
}

function Contact() {
  return (
    <main className="mx-auto grid w-full max-w-[1166px] grid-cols-[1fr_572px] pt-32 pb-[108px]">
      <div className="pt-[68px]">
        <span className={`flex h-12 w-[167px] justify-center rounded-lg bg-[#ffebe6] pt-2 text-xl leading-7 font-medium text-[#ff3e0c] ${HEAD}`}>CONTACT US</span>
        <h1 className={`mt-3 text-[58px] leading-[68px] font-extrabold text-[#10171d] ${HEAD}`}>Get In Touch</h1>
        <ul className="mt-[29px] flex flex-col gap-9">
          <ContactRow icon={<MailFast />} title="Email:" text="info@gmail.com" />
          <ContactRow icon={<PhoneWaves />} title="Call Now:" text="+91 987 3654 365" />
          <ContactRow icon={<PinOutline />} title="Location:" text="13 Sunset Blvd Los Angeles, CA 90026, USA" />
        </ul>
      </div>
      <form className="rounded-lg bg-[#2b3139] p-[54px]" onSubmit={(e) => e.preventDefault()}>
        <h2 className={`text-[41px] leading-[49px] font-extrabold text-white ${HEAD}`}>Get Appointment</h2>
        <span className="block h-px w-[99px] bg-[#ff3e0c]" />
        <div className="mt-[45px] flex flex-col gap-[18px]">
          <Field id="name" label="Full Name" type="text" />
          <Field id="email" label="Email Address" type="email" />
          <Field id="phone" label="Phone No." type="tel" />
          <div>
            <label htmlFor="message" className="sr-only">
              Message
            </label>
            <textarea id="message" placeholder="Message..." className={`${fieldClass} h-[108px] resize-y py-[14px] leading-5`} />
          </div>
        </div>
        <button type="submit" className="mt-9 h-[54px] w-full rounded-lg bg-[#ff3e0c] text-[13px] font-bold text-white">
          SUBMIT NOW
        </button>
      </form>
    </main>
  );
}

/* ---------- Footer ---------- */

const confetti: [x: number, y: number, w: number, h: number, r: number][] = [
  [205, 90, 26, 25, 0],
  [135, 172, 21, 20, 0],
  [42, 190, 33, 33, 0],
  [440, 33, 6, 6, 3],
  [434, 185, 6, 6, 1],
  [448, 243, 19, 19, 1],
  [461, 318, 31, 31, 0],
  [540, 47, 42, 42, 21],
  [596, 69, 4, 4, 2],
  [746, 42, 33, 33, 0],
  [839, 67, 6, 6, 3],
  [663, 84, 29, 30, 0],
  [615, 130, 13, 13, 0],
  [501, 244, 29, 29, 0],
  [575, 249, 29, 29, 0],
  [617, 250, 19, 20, 1],
  [664, 248, 24, 25, 0],
  [682, 187, 31, 31, 0],
  [749, 265, 24, 22, 0],
  [546, 311, 7, 8, 1],
  [764, 341, 16, 17, 0],
  [792, 356, 28, 13, 0],
  [947, 31, 17, 17, 0],
  [1062, 62, 12, 12, 1],
  [952, 196, 16, 17, 0],
  [1260, 102, 31, 29, 0],
  [1339, 108, 9, 9, 1],
  [1286, 143, 21, 21, 0],
  [1021, 318, 8, 8, 2],
];

function FooterHeading({ children }: { children: string }) {
  return (
    <div>
      <h2 className={`text-[23px] leading-8 font-bold text-white ${HEAD}`}>{children}</h2>
      <span className="block h-px w-[63px] bg-[#ff3e0c]" />
    </div>
  );
}

function FooterContact({ icon, lines }: { icon: React.ReactNode; lines: string[] }) {
  return (
    <li className="flex gap-[18px]">
      <span className="mt-[3px] flex h-9 w-9 shrink-0 items-center justify-center rounded-full bg-[#ff3e0c] text-white">{icon}</span>
      <p>
        {lines.map((line) => (
          <span key={line} className="block whitespace-nowrap">
            {line}
          </span>
        ))}
      </p>
    </li>
  );
}

function Footer() {
  const social = "flex h-9 w-9 items-center justify-center rounded-full bg-[#43474e] text-white";
  return (
    <footer className="relative bg-[#141b22] text-[13px] leading-[21px] text-[#a1a4a7]">
      <svg viewBox="0 3 1366 456" preserveAspectRatio="xMidYMin slice" className="absolute top-0 left-0 h-[456px] w-full" aria-hidden="true">
        {confetti.map(([x, y, w, h, r], i) => (
          <rect key={i} x={x} y={y} width={w} height={h} rx={r} fill="#1c232a" />
        ))}
      </svg>
      <div className="relative mx-auto grid min-h-[456px] w-full max-w-[1166px] grid-cols-[378px_216px_297px_275px] pt-[109px]">
        <div>
          <Logo light />
          <p className="mt-[22px] w-[270px]">
            Etiam suscipit fringilla ullamcorper sed malesuada urna nec odio.
          </p>
          <div className="mt-[23px] flex gap-[18px]">
            <ClockOutline />
            <div className="flex flex-col gap-[14px]">
              <div>
                <h3 className={`text-[14px] leading-[22px] font-semibold text-white ${HEAD}`}>Monday - Friday</h3>
                <p>7:00Am - 10:00Pm</p>
              </div>
              <div>
                <h3 className={`text-[14px] leading-[22px] font-semibold text-white ${HEAD}`}>Saturday - Sunday</h3>
                <p>7:00Am - 2:00Pm</p>
              </div>
            </div>
          </div>
        </div>
        <div>
          <FooterHeading>Our Links</FooterHeading>
          <ul className="mt-6 flex flex-col gap-[11px]">
            <li><a href="#home">Home</a></li>
            <li><a href="#about">About Us</a></li>
            <li><a href="#classes">Classes</a></li>
            <li><a href="#contact">Contact Us</a></li>
          </ul>
        </div>
        <div>
          <FooterHeading>Contact Us</FooterHeading>
          <ul className="mt-6 flex flex-col gap-3">
            <FooterContact icon={<MarkerIcon />} lines={["1247/Plot No. 39, 15th Phase,", "Colony, Kukatpally, Hyderabad"]} />
            <FooterContact icon={<PhoneIcon />} lines={["1800-121-3637", "+91 555 234-8765"]} />
            <FooterContact icon={<EnvelopeIcon />} lines={["info@gmail.com", "services@gmail.com"]} />
          </ul>
        </div>
        <div>
          <FooterHeading>Our Newsletter</FooterHeading>
          <form className="mt-6 flex h-[54px] items-center rounded-md bg-white pr-1" onSubmit={(e) => e.preventDefault()}>
            <label htmlFor="newsletter" className="sr-only">
              Email Address
            </label>
            <input id="newsletter" type="email" placeholder="Email Address" className="h-full w-full min-w-0 flex-1 bg-transparent pl-[27px] text-[13px] text-[#333] outline-none placeholder:text-[#777]" />
            <button type="submit" aria-label="Subscribe" className="flex h-[45px] w-[45px] items-center justify-center rounded-lg bg-[#ff3e0c] text-white">
              <ChevronIcon />
            </button>
          </form>
          <div className="mt-[27px] flex gap-[13px]">
            <a href="#facebook" aria-label="Facebook" className={social}><FacebookIcon /></a>
            <a href="#instagram" aria-label="Instagram" className={social}><FaInstagram className="h-[15px] w-[15px]" /></a>
            <a href="#twitter" aria-label="Twitter" className={social}><FaTwitter className="h-[13px] w-[13px]" /></a>
          </div>
        </div>
      </div>
      <div className="relative h-[27px] bg-[#04080b]" />
      <a href="#top" aria-label="Back to top" className="absolute right-[45px] bottom-[45px] flex h-[41px] w-[41px] items-center justify-center rounded-full bg-[#ff3e0c] text-[#141b22]">
        <ArrowUpIcon />
      </a>
    </footer>
  );
}

export default function App() {
  return (
    <div className={`w-full overflow-hidden bg-white ${BODY}`}>
      <Header />
      <Contact />
      <MapSection />
      <Footer />
    </div>
  );
}
